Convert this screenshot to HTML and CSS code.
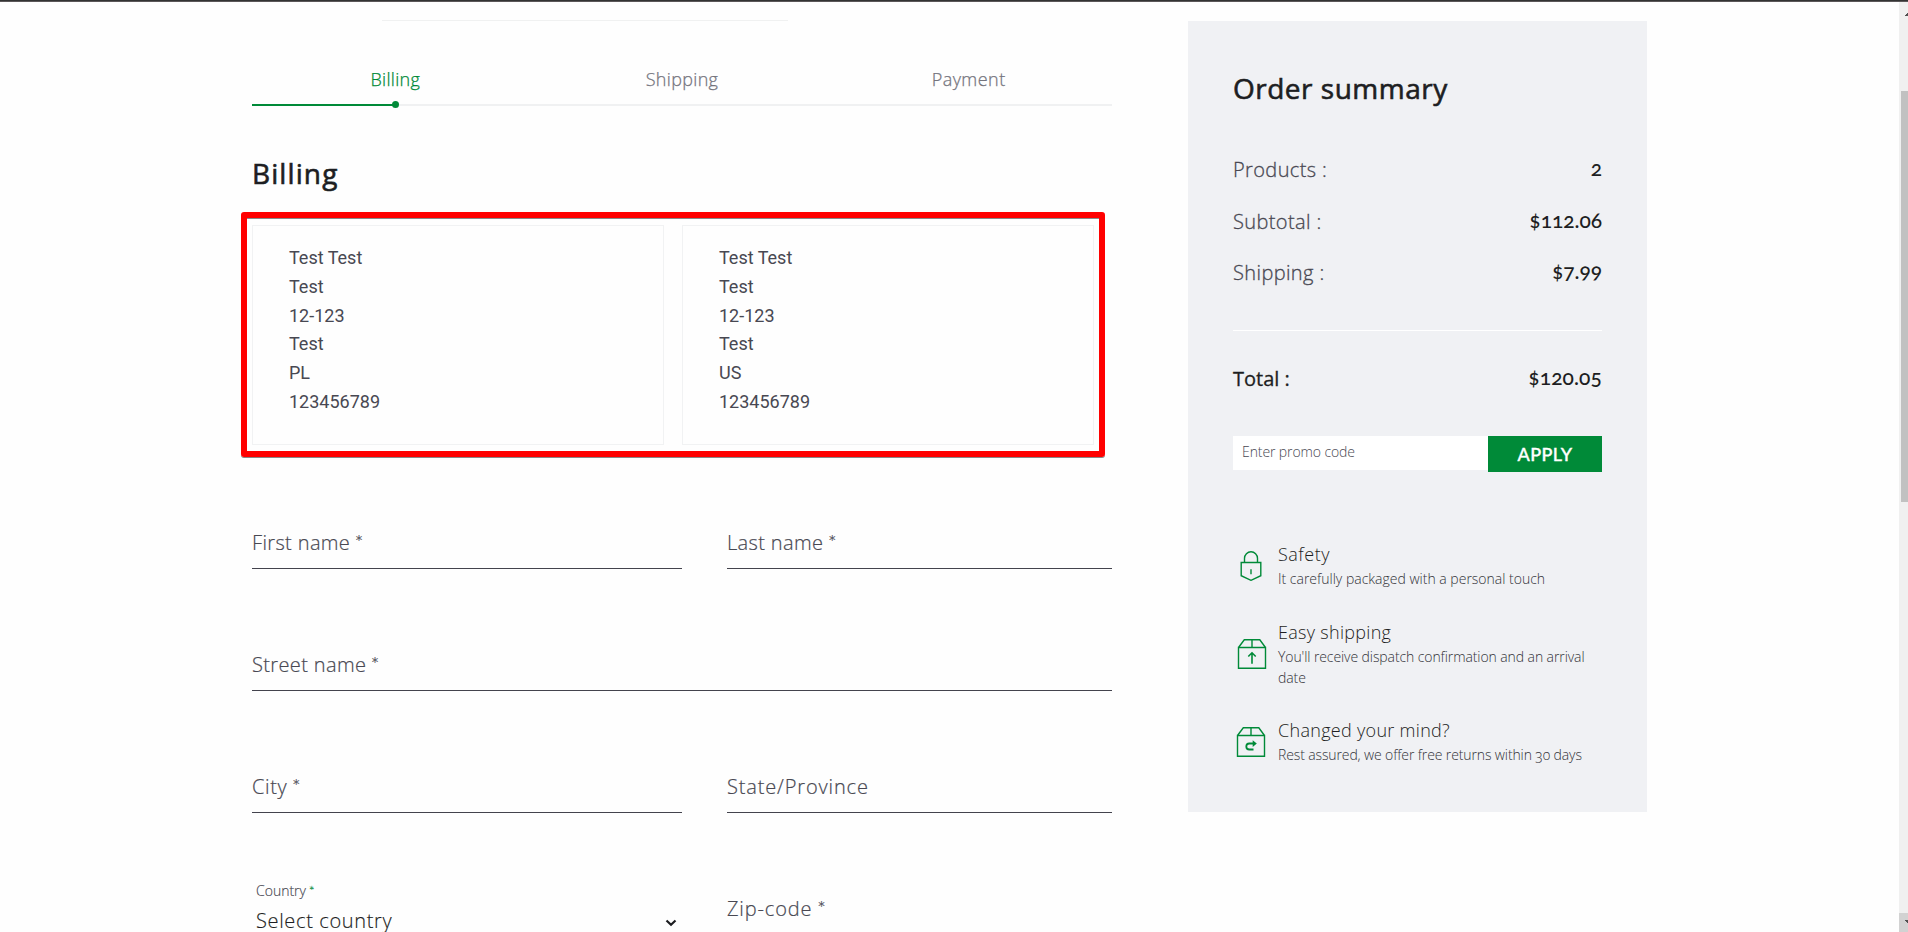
FILE: index.html
```
<!DOCTYPE html>
<html lang="en">
<head>
<meta charset="utf-8">
<title>Checkout - Billing</title>
<link rel="stylesheet" href="styles.css">
</head>
<body>
<div class="topbar"></div>
<div class="page">
  <main class="checkout">
    <div class="rule"></div>
    <nav class="steps">
      <span class="step step-active">Billing</span>
      <span class="step">Shipping</span>
      <span class="step step-pay">Payment</span>
    </nav>
    <div class="progress"><div class="progress-fill"></div></div>
    <h1 class="title">Billing</h1>
    <section class="addresses">
      <div class="address">Test Test<br>Test<br>12-123<br>Test<br>PL<br>123456789</div>
      <div class="address">Test Test<br>Test<br>12-123<br>Test<br>US<br>123456789</div>
    </section>
    <form class="form">
      <div class="field"><label>First name <span class="star">*</span></label></div>
      <div class="field"><label>Last name <span class="star">*</span></label></div>
      <div class="field field-wide"><label>Street name <span class="star">*</span></label></div>
      <div class="field"><label class="roomy">City <span class="star">*</span></label></div>
      <div class="field field-plain"><label class="wide">State/Province</label></div>
      <div class="select">
        <label class="select-label">Country <span class="star star-green">*</span></label>
        <div class="select-value"><span>Select country</span>
          <svg class="chevron" viewBox="0 0 12 8"><path d="M1.5 1.5 6 5.8 10.500 1.500" fill="none" stroke="#1c1d20" stroke-width="2.2"/></svg>
        </div>
      </div>
      <div class="field"><label class="wide">Zip-code <span class="star">*</span></label></div>
    </form>
  </main>
  <aside class="summary">
    <h2 class="summary-title">Order summary</h2>
    <div class="lines">
      <div class="line"><span>Products :</span><b>2</b></div>
      <div class="line"><span>Subtotal :</span><b>$112.06</b></div>
      <div class="line"><span>Shipping :</span><b>$7.99</b></div>
    </div>
    <div class="divider"></div>
    <div class="line line-total"><span>Total :</span><b>$120.05</b></div>
    <div class="promo">
      <div class="promo-input">Enter promo code</div>
      <div class="promo-button">APPLY</div>
    </div>
    <div class="perks">
      <div class="perk">
        <svg class="perk-icon" viewBox="0 0 30 30"><g fill="none" stroke="#008a38" stroke-width="1.4"><path d="M5.200 11.500h19.600v13.200L15 29.300l-9.800-4.600z"/><path d="M8.500 11.500V7.300a6.500 6.500 0 0 1 13 0v4.200"/><path d="M15 18.300v5"/></g></svg>
        <div><div class="perk-title perk-tight">Safety</div><div class="perk-text">It carefully packaged with a personal touch</div></div>
      </div>
      <div class="perk">
        <svg class="perk-icon perk-icon-shift" viewBox="0 0 30 30"><g fill="none" stroke="#008a38" stroke-width="1.400"><path d="M1.500 8.500h27v20.800h-27zM1.500 8.500 7.300.800h15.500l5.700 7.700M15 .800v7.700"/><path d="M15 24.800V14M11.300 17.500l3.700-3.700 3.700 3.700" stroke-width="1.600"/></g></svg>
        <div><div class="perk-title">Easy shipping</div><div class="perk-text perk-text-snug">You'll receive dispatch confirmation and an arrival date</div></div>
      </div>
      <div class="perk">
        <svg class="perk-icon" viewBox="0 0 30 30"><g fill="none" stroke="#008a38" stroke-width="1.400"><path d="M1.500 8.500h27v20.800h-27zM1.500 8.500 7.300.800h15.500l5.700 7.700M15 .800v7.700"/><path d="M17.500 22.500h-4.200a3 3 0 0 1 0-6h5.500" stroke-width="1.800"/></g><path d="M16.700 13.200 20.800 16.500l-4.100 3.500z" fill="#008a38"/></svg>
        <div><div class="perk-title">Changed your mind?</div><div class="perk-text perk-text-tight">Rest assured, we offer free returns within 30 days</div></div>
      </div>
    </div>
  </aside>
</div>
<div class="scrollbar">
  <svg class="arrow" viewBox="0 0 9 19"><path d="M6 14v-1h1v-1h1v-1h1v3z" fill="#505050"/></svg>
  <div class="thumb"></div>
  <div class="scroll-down"><svg class="arrow" viewBox="0 0 9 19"><path d="M6 7h3v3H8V9H7V8H6z" fill="#505050"/></svg></div>
</div>
</body>
</html>
```
FILE: styles.css
```
* { box-sizing: border-box; }
body {
  margin: 0;
  height: 932px;
  overflow: hidden;
  background: #fefefe;
  color: #484852;
  font-family: "Open Sans", sans-serif;
  font-weight: 300;
  font-variant-numeric: oldstyle-nums;
}
.topbar { height: 2px; background: linear-gradient(#333 50%, #5b5759 50%); }
.page { display: flex; gap: 76px; align-items: flex-start; padding-left: 252px; height: 930px; overflow: hidden; }

.checkout { width: 860px; flex: none; padding-top: 18px; }
.rule { width: 406px; height: 1px; margin-left: 130px; background: #f0f1f1; }
.steps { display: grid; grid-template-columns: repeat(3, 1fr); margin-top: 44px; }
.step { text-align: center; font-size: 18px; line-height: 28px; letter-spacing: .33px; color: #74747d; -webkit-text-stroke: .25px; }
.step-pay { letter-spacing: .45px; }
.step-active { color: #008a38; }
.progress { height: 2px; margin-top: 11px; background: #f0f1f2; }
.progress-fill { position: relative; width: 144px; height: 2px; background: #008a38; }
.progress-fill::after { content: ""; position: absolute; right: -3px; top: -3px; width: 7px; height: 7px; border-radius: 50%; background: #008a38; }
.title, .summary-title { margin: 0; font-size: 28px; line-height: 40px; font-weight: 500; color: #1d1e22; -webkit-text-stroke: .6px; }
.title { margin-top: 47px; letter-spacing: 1.1px; }

.addresses { display: flex; gap: 18px; width: 864px; height: 245px; margin: 19px 0 0 -11px; padding: 7px 5px; border: 6px solid #f00; border-radius: 3px; box-shadow: inset 0 1px #888, 0 1px #888; }
.address { width: 412px; height: 220px; padding: 18px 36px; border: 1px solid #f1f2f3; font: 400 18px/28.8px Roboto, sans-serif; font-variant-numeric: normal; }

.form { display: grid; grid-template-columns: 430px 385px; column-gap: 45px; row-gap: 81px; margin-top: 71px; }
.field { height: 41px; border-bottom: 1px solid #43434d; font-size: 20px; line-height: 28px; letter-spacing: .36px; -webkit-text-stroke: .2px; }
.field-wide { grid-column: 1 / -1; }
.field-plain { padding-top: 1px; }
.field .roomy { letter-spacing: .6px; }
.field .wide { letter-spacing: .85px; }
.star { font-family: Lato, sans-serif; letter-spacing: 0; margin-left: -1px; }
.star-green { color: #008a38; }
.select { margin-top: -13px; padding: 0 17px 0 4px; -webkit-text-stroke: .15px; }
.select-label { display: block; font-size: 14px; line-height: 20px; }
.select-value { display: flex; justify-content: space-between; align-items: center; width: 421px; margin-top: 6px; font-size: 20px; line-height: 28px; letter-spacing: .65px; color: #1d1e22; }
.chevron { width: 12px; height: 8px; margin-top: 3px; }

.summary { width: 459px; height: 791px; margin-top: 19px; padding: 47px 45px 0; background: #f0f1f4; }
.summary-title { letter-spacing: .5px; }
.lines { display: grid; row-gap: 23.5px; margin-top: 48px; }
.line { display: flex; justify-content: space-between; height: 28px; font-size: 20px; line-height: 28px; letter-spacing: .38px; -webkit-text-stroke: .3px; }
.line b { font-family: Lato, sans-serif; font-size: 21px; font-weight: 500; line-height: 24px; letter-spacing: -.05px; color: #1d1e22; -webkit-text-stroke: 0; }
.divider { height: 1px; margin-top: 43px; background: #fff; }
.line-total { margin-top: 34px; font-weight: 500; letter-spacing: 0; color: #1d1e22; }
.line-total b { letter-spacing: .1px; }
.promo { display: flex; align-items: flex-start; margin-top: 43px; }
.promo-input { width: 255px; height: 34px; padding-left: 9px; background: #fff; font-size: 14px; line-height: 31px; letter-spacing: -.1px; }
.promo-button { width: 114px; height: 36px; background: #008a38; color: #fff; text-align: center; font: 500 18px/37px Lato, sans-serif; letter-spacing: .4px; -webkit-text-stroke: .35px; }

.perks { display: grid; row-gap: 30px; margin-top: 70px; }
.perk { display: grid; grid-template-columns: 45px 1fr; align-items: center; }
.perk-icon { width: 30px; height: 30px; margin-left: 2.500px; }
.perk-icon-shift { margin-left: 4px; }
.perk-title { font-size: 18px; line-height: 24px; letter-spacing: .3px; color: #1d1e22; }
.perk-tight { letter-spacing: .5px; }
.perk-text { margin-top: 2px; padding-bottom: .5px; font-size: 14px; line-height: 21px; letter-spacing: 0; color: #333339; }
.perk-text-snug { letter-spacing: -.09px; }
.perk-text-tight { letter-spacing: -.12px; }

.scrollbar { position: absolute; top: 2px; right: 0; display: flex; flex-direction: column; width: 9px; height: 930px; background: #f0f0f0; }
.arrow { display: block; width: 9px; height: 19px; }
.thumb { height: 411px; margin: 70px 0 0 2px; background: #c1c1c1; }
.scroll-down { margin-top: auto; height: 19px; background: #d2d2d2; }
```
